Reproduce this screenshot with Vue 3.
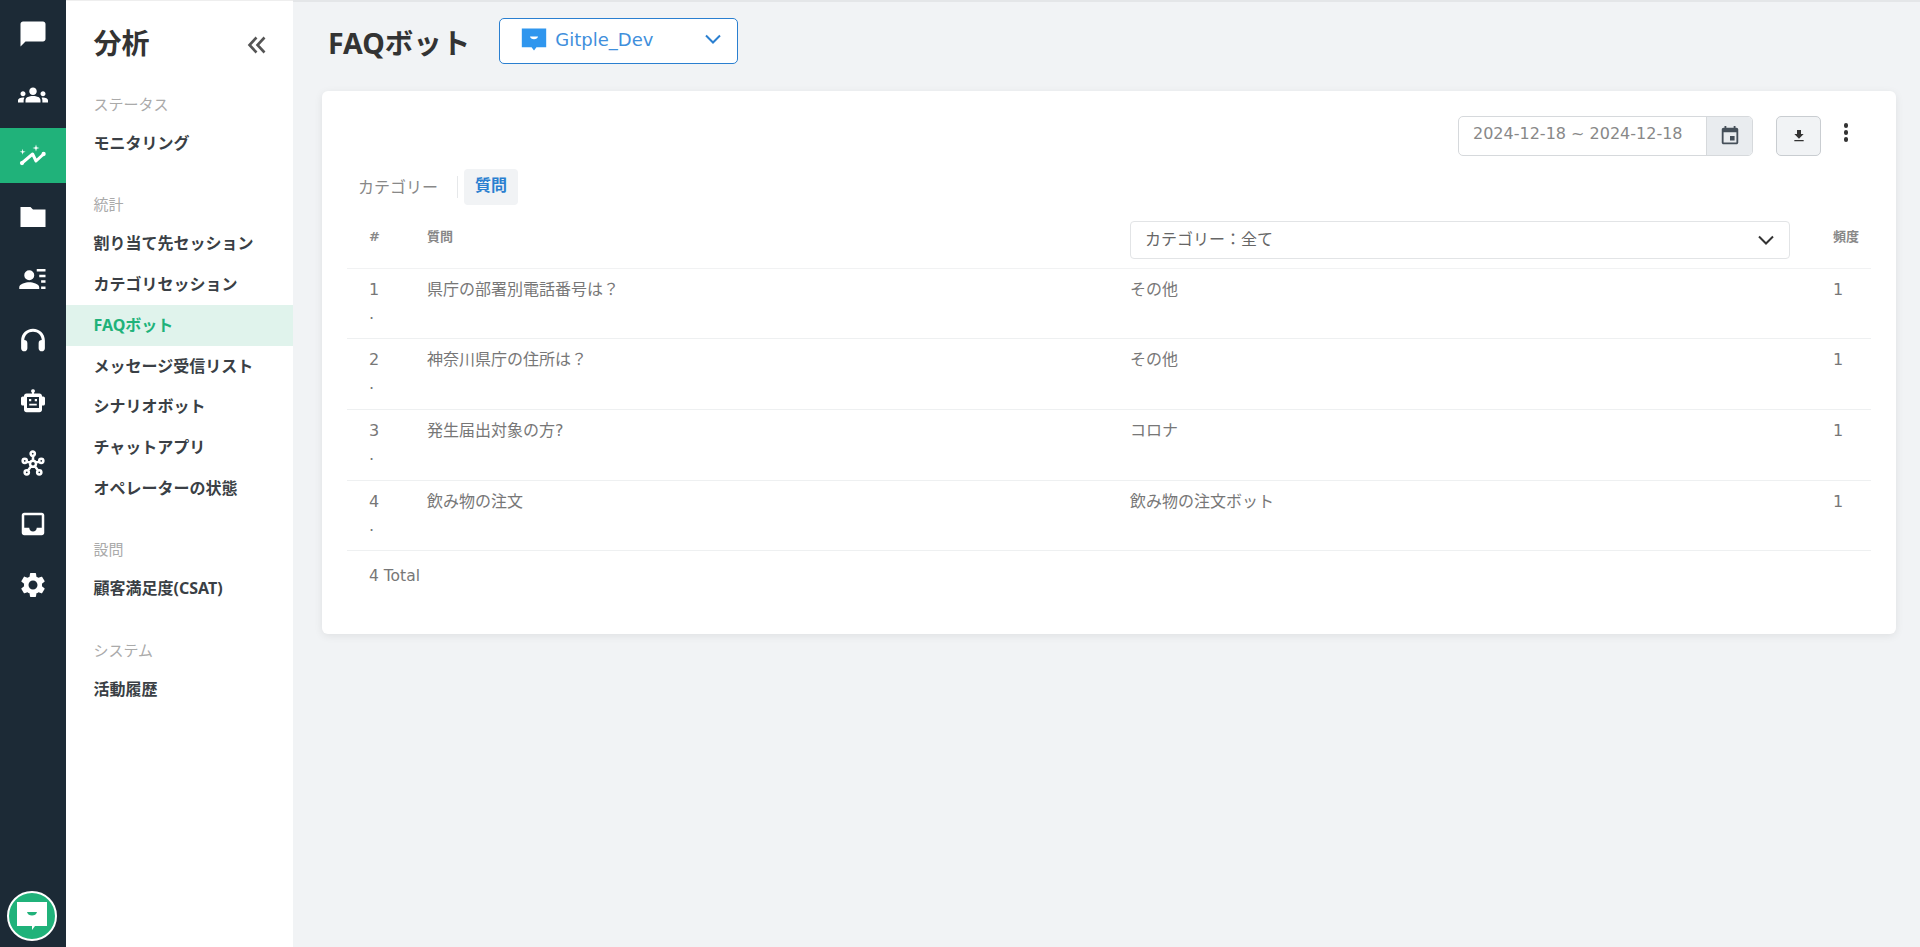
<template>
  <div class="page">
    <nav class="rail">
      <div class="rail-list">
        <a v-for="item in railItems" :key="item.name" class="rail-item" :class="{ active: item.active }">
          <svg viewBox="0 0 24 24" width="30" height="30" fill="#fff" fill-rule="evenodd">
            <path v-if="item.d" :d="item.d" />
            <path v-if="item.line" :d="item.line" fill="none" stroke="#fff" :stroke-width="item.weight || 2" stroke-linejoin="round" />
          </svg>
        </a>
      </div>
      <div class="rail-logo">
        <svg viewBox="0 0 32 32" width="32" height="32">
          <path d="M1 2h30v24H19l-3 4v-4H1z" fill="#fff" />
          <path d="M11 12h10c-.6 2.4-2.5 3.6-5 3.6s-4.4-1.2-5-3.6z" fill="#20b27a" />
        </svg>
      </div>
    </nav>

    <aside class="sidebar">
      <div class="side-head">
        <h2>分析</h2>
        <svg class="collapse" viewBox="0 0 20 20" width="20" height="20" fill="none" stroke="#555" stroke-width="2.6">
          <path d="M9.5 2.5 2.5 10l7 7.5M17.5 2.5 10.5 10l7 7.5" />
        </svg>
      </div>
      <section v-for="group in menu" :key="group.title" class="side-group">
        <div class="side-label">{{ group.title }}</div>
        <a v-for="link in group.links" :key="link" class="side-link" :class="{ current: link === 'FAQボット' }">{{ link }}</a>
      </section>
    </aside>

    <main class="main">
      <header class="top">
        <h1>FAQボット</h1>
        <div class="bot-select">
          <svg viewBox="0 0 32 32" width="26" height="26">
            <path d="M1 3h30v23H19l-3 4-3-4H1z" fill="#2f96ee" />
            <path d="M11 13h10c-.6 2.2-2.5 3.2-5 3.2s-4.4-1-5-3.2z" fill="#fff" />
          </svg>
          <span>Gitple_Dev</span>
          <svg class="chev" viewBox="0 0 16 10" width="16" height="10" fill="none" stroke="#2a7fd0" stroke-width="2">
            <path d="m1 1.5 7 7 7-7" />
          </svg>
        </div>
      </header>

      <div class="card">
        <div class="toolbar">
          <div class="date-range">
            <div class="date-text">2024-12-18 ~ 2024-12-18</div>
            <div class="date-btn">
              <svg viewBox="0 0 24 24" width="22" height="22" fill="#454f59">
                <path d="M17 12h-5v5h5v-5zM16 1v2H8V1H6v2H5c-1.11 0-1.99.9-1.99 2L3 19c0 1.1.89 2 2 2h14c1.1 0 2-.9 2-2V5c0-1.1-.9-2-2-2h-1V1h-2zm3 18H5V8h14v11z" />
              </svg>
            </div>
          </div>
          <button class="dl-btn">
            <svg viewBox="0 0 24 24" width="16" height="16" fill="#333"><path d="M19 9h-4V3H9v6H5l7 7 7-7zM5 18v2h14v-2H5z" /></svg>
          </button>
          <div class="kebab"><i></i><i></i><i></i></div>
        </div>

        <div class="tabs">
          <span class="tab">カテゴリー</span>
          <span class="tab-sep"></span>
          <span class="tab on">質問</span>
        </div>

        <table class="faq">
          <colgroup>
            <col style="width: 80px" />
            <col style="width: 703px" />
            <col style="width: 681px" />
            <col />
          </colgroup>
          <thead>
            <tr>
              <th class="num">#</th>
              <th>質問</th>
              <th class="sel">
                <div class="cat-select">
                  <span>カテゴリー：全て</span>
                  <svg viewBox="0 0 16 10" width="16" height="10" fill="none" stroke="#333" stroke-width="2"><path d="m1 1.5 7 7 7-7" /></svg>
                </div>
              </th>
              <th class="freq">頻度</th>
            </tr>
          </thead>
          <tbody>
            <tr v-for="(row, i) in rows" :key="i">
              <td class="num"><div class="idx">{{ i + 1 }}.</div></td>
              <td>{{ row.question }}</td>
              <td>{{ row.category }}</td>
              <td class="freq">{{ row.count }}</td>
            </tr>
          </tbody>
        </table>
        <div class="total">{{ rows.length }} Total</div>
      </div>
    </main>
  </div>
</template>

<script setup>
const ring = (cx, cy, r) => `M${cx - r} ${cy}a${r} ${r} 0 1 0 ${2 * r} 0a${r} ${r} 0 1 0 ${-2 * r} 0z`

const railItems = [
  { name: 'chat', d: 'M20 2H4c-1.1 0-2 .9-2 2v18l4-4h14c1.1 0 2-.9 2-2V4c0-1.1-.9-2-2-2z' },
  { name: 'groups', d: 'M12 12.75c1.63 0 3.07.39 4.24.9 1.08.48 1.76 1.56 1.76 2.73V18H6v-1.61c0-1.18.68-2.26 1.76-2.73 1.17-.52 2.61-.91 4.24-.91zM4 13c1.1 0 2-.9 2-2s-.9-2-2-2-2 .9-2 2 .9 2 2 2zm1.13 1.1c-.37-.06-.74-.1-1.13-.1-.99 0-1.93.21-2.78.58C.48 14.9 0 15.62 0 16.43V18h4.5v-1.61c0-.83.23-1.61.63-2.29zM20 13c1.1 0 2-.9 2-2s-.9-2-2-2-2 .9-2 2 .9 2 2 2zm4 3.43c0-.81-.48-1.53-1.22-1.85-.85-.37-1.79-.58-2.78-.58-.39 0-.76.04-1.13.1.4.68.63 1.46.63 2.29V18H24v-1.57zM12 6c1.66 0 3 1.34 3 3s-1.34 3-3 3-3-1.34-3-3 1.34-3 3-3z' },
  {
    name: 'stats',
    active: true,
    weight: 2.4,
    d: `M3.700 6.200l.5 1.900 1.900.5-1.900.5-.5 1.900-.5-1.900-1.900-.5 1.900-.5zM14.400 2.800l.6 2.200 2.200.6-2.200.6-.6 2.200-.6-2.200-2.200-.6 2.200-.6z${ring(3.2, 17.6, 1.7)}${ring(20.5, 10.4, 1.7)}`,
    line: 'M3.200 17.600 11.700 10.400 14.400 16 20.500 10.400'
  },
  { name: 'folder', d: 'M2 4h8l2 2h10v14H2z' },
  { name: 'contacts', d: 'M9 5a4 4 0 1 1 0 8 4 4 0 0 1 0-8zM1 20v-1.500c0-2.700 5.300-4 8-4s8 1.300 8 4V20zM15 4h7v2h-7zM17 8.500h5v2h-5zM18.500 13H22v2h-3.500zM18.500 18H22v2h-3.500z' },
  { name: 'headset', d: 'M12 3c-5.200 0-9.500 4-9.500 9.500v6c0 1.400 1.100 2.500 2.500 2.500s2.500-1.100 2.500-2.500v-4C7.500 13 6.500 12 5 12c.2-3.900 3.200-6.600 7-6.600s6.800 2.700 7 6.600c-1.500 0-2.500 1-2.500 2.500v4c0 1.400 1.100 2.500 2.500 2.500s2.500-1.100 2.500-2.500v-6C21.500 7 17.200 3 12 3z' },
  { name: 'bot', d: 'M12 2.600a1.500 1.500 0 0 1 .8 2.800V6h4.400c1.100 0 2 .9 2 2v.4h1c.7 0 1.400.6 1.400 1.300v4.600c0 .7-.7 1.300-1.400 1.300h-1V19c0 1.100-.9 2-2 2H6.800c-1.100 0-2-.9-2-2v-3.400h-1c-.7 0-1.400-.6-1.400-1.300V9.700c0-.7.7-1.300 1.400-1.300h1V8c0-1.100.9-2 2-2h4.400v-.6A1.500 1.500 0 0 1 12 2.600zM7.200 8.800v8.800h9.600V8.800zM8.800 10.400h1.800v1.800H8.800zM13.400 10.400h1.800v1.800h-1.800zM9 14.200h6v1.400H9z' },
  {
    name: 'hub',
    line: `${ring(12, 12.5, 2.4)}${ring(11.8, 4.6, 1.7)}${ring(5.4, 10.2, 1.7)}${ring(18.6, 10.2, 1.7)}${ring(7, 19.4, 1.7)}${ring(17, 19.4, 1.7)}M12 6.300V10M7 10.900 9.700 11.700M17 10.900 14.300 11.700M8 18 10.500 14.500M16 18 13.500 14.500`
  },
  { name: 'inbox', d: 'M19 3H5c-1.100 0-2 .9-2 2v14c0 1.100.9 2 2 2h14c1.100 0 2-.9 2-2V5c0-1.100-.9-2-2-2zm0 12h-4c0 1.660-1.350 3-3 3s-3-1.340-3-3H5V5h14v10z' },
  { name: 'settings', d: 'M19.140 12.940c.04-.3.06-.61.06-.94 0-.32-.02-.64-.07-.94l2.030-1.580c.18-.14.23-.41.12-.61l-1.920-3.320c-.12-.22-.37-.29-.59-.22l-2.390.96c-.5-.38-1.030-.7-1.620-.94l-.36-2.540c-.04-.24-.24-.41-.48-.41h-3.840c-.24 0-.43.17-.47.41l-.36 2.540c-.59.24-1.130.57-1.620.94l-2.390-.96c-.22-.08-.47 0-.59.22L2.740 8.870c-.12.21-.08.47.12.61l2.030 1.580c-.05.3-.09.63-.09.94s.02.64.07.94l-2.030 1.580c-.18.14-.23.41-.12.61l1.920 3.320c.12.22.37.29.59.22l2.390-.96c.5.38 1.030.7 1.620.94l.36 2.540c.05.24.24.41.48.41h3.840c.24 0 .44-.17.47-.41l.36-2.540c.59-.24 1.130-.56 1.620-.94l2.390.96c.22.08.47 0 .59-.22l1.920-3.320c.12-.22.07-.47-.12-.61l-2.010-1.580zM12 15.600c-1.980 0-3.600-1.620-3.600-3.600s1.620-3.600 3.600-3.600 3.600 1.620 3.600 3.600-1.620 3.600-3.600 3.600z' }
]

const menu = [
  { title: 'ステータス', links: ['モニタリング'] },
  { title: '統計', links: ['割り当て先セッション', 'カテゴリセッション', 'FAQボット', 'メッセージ受信リスト', 'シナリオボット', 'チャットアプリ', 'オペレーターの状態'] },
  { title: '設問', links: ['顧客満足度(CSAT)'] },
  { title: 'システム', links: ['活動履歴'] }
]

const rows = [
  { question: '県庁の部署別電話番号は？', category: 'その他', count: 1 },
  { question: '神奈川県庁の住所は？', category: 'その他', count: 1 },
  { question: '発生届出対象の方?', category: 'コロナ', count: 1 },
  { question: '飲み物の注文', category: '飲み物の注文ボット', count: 1 }
]
</script>

<style>
html, body { margin: 0; height: 100%; }
</style>

<style scoped>
.page {
  display: flex;
  height: 947px;
  overflow: hidden;
  font-family: "Noto Sans", "Noto Sans CJK JP", sans-serif;
  color: #333;
}

.rail {
  width: 66px;
  flex: none;
  background: #1c2a36;
  display: flex;
  flex-direction: column;
  justify-content: space-between;
}

.rail-list {
  display: flex;
  flex-direction: column;
  gap: 6.3px;
  padding-top: 5.5px;
}

.rail-item {
  height: 55px;
  padding-top: 1px;
  box-sizing: border-box;
  display: flex;
  align-items: center;
  justify-content: center;
}

.rail-item.active {
  background: #20b27a;
}

.rail-logo {
  width: 46px;
  height: 46px;
  margin: 0 0 6px 7px;
  border: 2px solid #fff;
  border-radius: 50%;
  background: #20b27a;
  display: flex;
  align-items: center;
  justify-content: center;
}

.sidebar {
  width: 227px;
  flex: none;
  background: #fff;
  border-top: 1px solid #eee;
  box-sizing: border-box;
}

.side-head {
  height: 86px;
  padding: 0 26px 5px 27.5px;
  display: flex;
  align-items: center;
  justify-content: space-between;
  box-sizing: border-box;
}

.side-head h2 {
  margin: 0;
  font-size: 28px;
  font-weight: 700;
}

.collapse {
  margin-top: 6px;
}

.side-group {
  margin-bottom: 23.5px;
}

.side-label {
  height: 36px;
  line-height: 34px;
  padding-left: 27.5px;
  font-size: 15px;
  color: #aaa;
}

.side-link {
  display: block;
  height: 40.8px;
  line-height: 40px;
  padding-left: 27.5px;
  font-size: 16px;
  font-weight: 700;
  color: #3a3f45;
}

.side-link.current {
  background: #e0f3ec;
  color: #20b27a;
}

.main {
  flex: 1;
  min-width: 0;
  background: #f1f3f5;
  border-top: 2px solid #e4e6e8;
  box-sizing: border-box;
}

.top {
  height: 89px;
  padding-left: 35px;
  display: flex;
  align-items: flex-start;
}

.top h1 {
  margin: 19px 0 0;
  font-size: 28.5px;
  line-height: 44px;
  font-weight: 700;
}

.bot-select {
  width: 239px;
  height: 46px;
  margin: 16px 0 0 29px;
  padding: 0 16px 4px 21px;
  box-sizing: border-box;
  background: #fff;
  border: 1px solid #2a7fd0;
  border-radius: 5px;
  display: flex;
  align-items: center;
  gap: 8px;
  font-family: "DejaVu Sans", sans-serif;
  font-size: 18px;
  color: #3f8fdc;
}

.bot-select .chev {
  margin-left: auto;
}

.card {
  margin: 0 24px 0 29px;
  height: 543px;
  padding: 25px 25px 0;
  box-sizing: border-box;
  background: #fff;
  border-radius: 6px;
  box-shadow: 0 2px 8px rgba(0, 0, 0, 0.08);
}

.toolbar {
  display: flex;
  justify-content: flex-end;
  align-items: flex-start;
  height: 40px;
  padding-right: 14px;
}

.date-range {
  width: 295px;
  height: 40px;
  box-sizing: border-box;
  display: flex;
  border: 1px solid #d6d9dc;
  border-radius: 5px;
  overflow: hidden;
}

.date-text {
  flex: 1;
  padding-left: 14px;
  font-family: "DejaVu Sans", sans-serif;
  font-size: 16px;
  line-height: 34px;
  color: #888;
}

.date-btn {
  width: 45px;
  background: #e9ecef;
  border-left: 1px solid #d6d9dc;
  display: flex;
  align-items: center;
  justify-content: center;
}

.dl-btn {
  width: 45px;
  height: 40px;
  margin-left: 23px;
  padding: 0;
  background: #f1f3f5;
  border: 1px solid #c9cdd1;
  border-radius: 5px;
  display: flex;
  align-items: center;
  justify-content: center;
}

.kebab {
  width: 22px;
  margin-left: 14px;
  padding-top: 7px;
  display: flex;
  flex-direction: column;
  align-items: center;
  gap: 2.5px;
}

.kebab i {
  width: 4.5px;
  height: 4.5px;
  border-radius: 50%;
  background: #333;
}

.tabs {
  margin-top: 13px;
  height: 36px;
  display: flex;
  align-items: center;
  font-size: 16px;
  line-height: 32px;
  padding-left: 11px;
}

.tab {
  color: #888;
}

.tab.on {
  height: 36px;
  padding: 0 11px;
  line-height: 32px;
  background: #f1f3f5;
  border-radius: 4px;
  color: #2a7fd0;
  font-weight: 700;
}

.tab-sep {
  width: 1px;
  height: 22px;
  margin: 0 6px 0 19px;
  background: #e6e8ea;
}

.faq {
  width: 100%;
  table-layout: fixed;
  border-collapse: collapse;
  font-family: "DejaVu Sans", "Noto Sans CJK JP", sans-serif;
  color: #777;
  font-size: 16px;
}

.faq th {
  height: 63px;
  padding: 23px 0 0;
  box-sizing: border-box;
  vertical-align: top;
  text-align: left;
  font-size: 13px;
  line-height: 18px;
  font-weight: 700;
  color: #888;
  border-bottom: 1px solid #f1f2f3;
}

.faq th.sel {
  padding: 16px 21px 0 0;
}

.faq td {
  height: 70.7px;
  padding: 9px 0 0;
  box-sizing: border-box;
  vertical-align: top;
  line-height: 24px;
  border-bottom: 1px solid #eef0f1;
}

.faq .num,
.faq .freq {
  padding-left: 22px;
}

.idx {
  width: 10.5px;
  line-break: anywhere;
}

.cat-select {
  height: 38px;
  padding: 0 15px 1px 14px;
  box-sizing: border-box;
  border: 1px solid #e2e4e6;
  border-radius: 4px;
  display: flex;
  align-items: center;
  justify-content: space-between;
  font-size: 16px;
  font-weight: 400;
  color: #666;
}

.total {
  padding: 13px 0 0 22px;
  font-family: "DejaVu Sans", sans-serif;
  font-size: 15.5px;
  line-height: 24px;
  color: #777;
}
</style>
